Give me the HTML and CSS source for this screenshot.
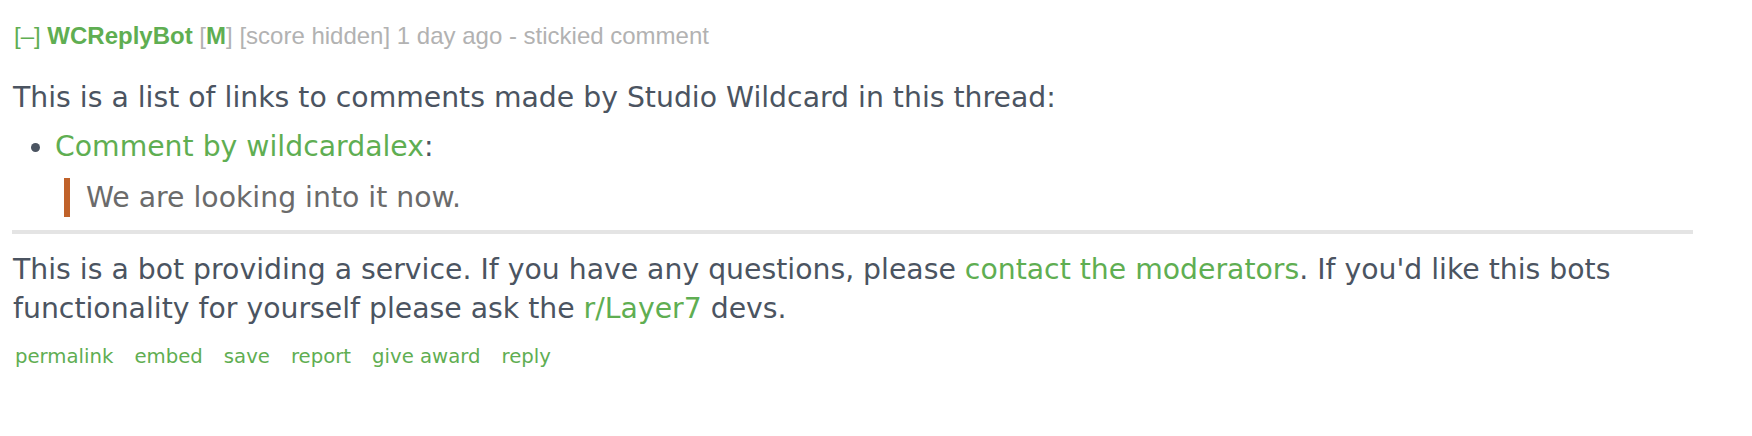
FILE: index.html
```html
<!DOCTYPE html>
<html>
<head>
<meta charset="utf-8">
<link rel="stylesheet" href="styles.css">
</head>
<body>
<div class="comment">
  <p class="tagline">
    <span class="expand">[–]</span>
    <span class="author">WCReplyBot</span>
    <span class="mod">[<b>M</b>]</span>
    <span class="meta">[score hidden] 1 day ago - stickied comment</span>
  </p>
  <div class="md">
    <p class="para">This is a list of links to comments made by Studio Wildcard in this thread:</p>
    <ul class="list">
      <li><a class="link" href="#">Comment by wildcardalex</a>:
        <blockquote class="quote">We are looking into it now.</blockquote>
      </li>
    </ul>
    <hr class="rule">
    <p class="para">This is a bot providing a service. If you have any questions, please <a class="link" href="#">contact the moderators</a>. If you'd like this bots functionality for yourself please ask the <a class="link" href="#">r/Layer7</a> devs.</p>
  </div>
  <ul class="buttons">
    <li><a class="btn" href="#">permalink</a></li>
    <li><a class="btn" href="#">embed</a></li>
    <li><a class="btn" href="#">save</a></li>
    <li><a class="btn" href="#">report</a></li>
    <li><a class="btn" href="#">give award</a></li>
    <li><a class="btn" href="#">reply</a></li>
  </ul>
</div>
</body>
</html>
```

FILE: styles.css
```css
html, body {
  margin: 0;
  padding: 0;
  background: #ffffff;
}

.comment {
  padding: 23px 0 0 13px;
}

.tagline {
  margin: 0;
  font-family: "Liberation Sans", Arial, sans-serif;
  font-size: 24px;
  line-height: 26px;
  color: #b2b2b2;
}

.expand {
  color: #5fae52;
  margin-left: 1px;
}

.author {
  color: #5fae52;
  font-weight: bold;
}

.mod b {
  color: #5fae52;
  font-weight: bold;
}

.md {
  width: 1680px;
  margin-top: 29px;
  font-family: "DejaVu Sans", Verdana, sans-serif;
  font-size: 28.3px;
  line-height: 39px;
  color: #4b5461;
}

.para {
  margin: 0;
}

.link {
  color: #5fae52;
  text-decoration: none;
}

.list {
  margin: 10px 0 0 0;
  padding: 0 0 0 42px;
}

.list li::marker {
  color: #4b5461;
}

.quote {
  margin: 12px 0 0 9px;
  padding-left: 16px;
  border-left: 6px solid #c0622a;
  color: #6b6b6b;
}

.rule {
  margin: 13px 0 0 -1px;
  border: 0;
  height: 4px;
  background: #e4e4e4;
}

.md .rule + .para {
  margin-top: 16px;
}

.buttons {
  list-style: none;
  display: flex;
  gap: 21px;
  margin: 17px 0 0 2px;
  padding: 0;
  font-family: "DejaVu Sans", Verdana, sans-serif;
  font-size: 19.7px;
  line-height: 24px;
}

.btn {
  color: #5fae52;
  text-decoration: none;
}
```
